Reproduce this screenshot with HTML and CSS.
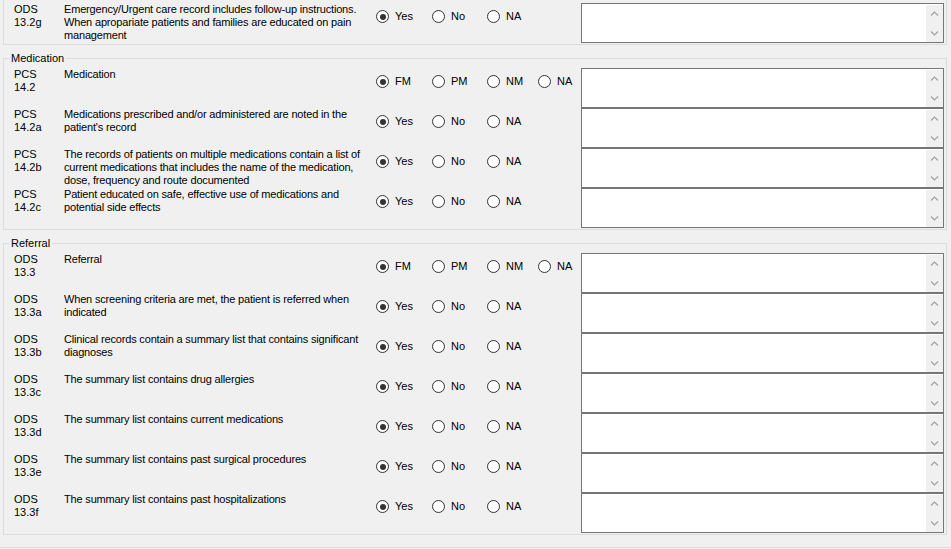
FILE: index.html
```html
<!DOCTYPE html>
<html lang="en">
<head>
<meta charset="utf-8">
<title>Checklist</title>
<link rel="stylesheet" href="styles.css">
</head>
<body>
<div class="group partial">
  <div class="row">
    <div class="code">ODS<br>13.2g</div>
    <div class="desc">Emergency/Urgent care record includes follow-up instructions.<br>When apropariate patients and families are educated on pain<br>management</div>
    <div class="opts"><span class="opt w1"><span class="radio on"></span>Yes</span><span class="opt w2"><span class="radio"></span>No</span><span class="opt w3"><span class="radio"></span>NA</span></div>
    <div class="memo"><div class="vscroll"><span class="btn"><svg width="9" height="5" viewBox="0 0 9 5"><path d="M1 4.5L4.5 1L8 4.5"/></svg></span><span class="btn"><svg width="9" height="5" viewBox="0 0 9 5"><path d="M1 0.5L4.5 4L8 0.5"/></svg></span></div></div>
  </div>
</div>

<fieldset class="group">
  <legend>Medication</legend>
  <div class="row">
    <div class="code">PCS<br>14.2</div>
    <div class="desc">Medication</div>
    <div class="opts"><span class="opt w1"><span class="radio on"></span>FM</span><span class="opt w2"><span class="radio"></span>PM</span><span class="opt w3"><span class="radio"></span>NM</span><span class="opt"><span class="radio"></span>NA</span></div>
    <div class="memo"><div class="vscroll"><span class="btn"><svg width="9" height="5" viewBox="0 0 9 5"><path d="M1 4.5L4.5 1L8 4.5"/></svg></span><span class="btn"><svg width="9" height="5" viewBox="0 0 9 5"><path d="M1 0.5L4.5 4L8 0.5"/></svg></span></div></div>
  </div>
  <div class="row">
    <div class="code">PCS<br>14.2a</div>
    <div class="desc">Medications prescribed and/or administered are noted in the<br>patient's record</div>
    <div class="opts"><span class="opt w1"><span class="radio on"></span>Yes</span><span class="opt w2"><span class="radio"></span>No</span><span class="opt w3"><span class="radio"></span>NA</span></div>
    <div class="memo"><div class="vscroll"><span class="btn"><svg width="9" height="5" viewBox="0 0 9 5"><path d="M1 4.5L4.5 1L8 4.5"/></svg></span><span class="btn"><svg width="9" height="5" viewBox="0 0 9 5"><path d="M1 0.5L4.5 4L8 0.5"/></svg></span></div></div>
  </div>
  <div class="row">
    <div class="code">PCS<br>14.2b</div>
    <div class="desc">The records of patients on multiple medications contain a list of<br>current medications that includes the name of the medication,<br>dose, frequency and route documented</div>
    <div class="opts"><span class="opt w1"><span class="radio on"></span>Yes</span><span class="opt w2"><span class="radio"></span>No</span><span class="opt w3"><span class="radio"></span>NA</span></div>
    <div class="memo"><div class="vscroll"><span class="btn"><svg width="9" height="5" viewBox="0 0 9 5"><path d="M1 4.5L4.5 1L8 4.5"/></svg></span><span class="btn"><svg width="9" height="5" viewBox="0 0 9 5"><path d="M1 0.5L4.5 4L8 0.5"/></svg></span></div></div>
  </div>
  <div class="row">
    <div class="code">PCS<br>14.2c</div>
    <div class="desc">Patient educated on safe, effective use of medications and<br>potential side effects</div>
    <div class="opts"><span class="opt w1"><span class="radio on"></span>Yes</span><span class="opt w2"><span class="radio"></span>No</span><span class="opt w3"><span class="radio"></span>NA</span></div>
    <div class="memo"><div class="vscroll"><span class="btn"><svg width="9" height="5" viewBox="0 0 9 5"><path d="M1 4.5L4.5 1L8 4.5"/></svg></span><span class="btn"><svg width="9" height="5" viewBox="0 0 9 5"><path d="M1 0.5L4.5 4L8 0.5"/></svg></span></div></div>
  </div>
</fieldset>

<fieldset class="group">
  <legend>Referral</legend>
  <div class="row">
    <div class="code">ODS<br>13.3</div>
    <div class="desc">Referral</div>
    <div class="opts"><span class="opt w1"><span class="radio on"></span>FM</span><span class="opt w2"><span class="radio"></span>PM</span><span class="opt w3"><span class="radio"></span>NM</span><span class="opt"><span class="radio"></span>NA</span></div>
    <div class="memo"><div class="vscroll"><span class="btn"><svg width="9" height="5" viewBox="0 0 9 5"><path d="M1 4.5L4.5 1L8 4.5"/></svg></span><span class="btn"><svg width="9" height="5" viewBox="0 0 9 5"><path d="M1 0.5L4.5 4L8 0.5"/></svg></span></div></div>
  </div>
  <div class="row">
    <div class="code">ODS<br>13.3a</div>
    <div class="desc">When screening criteria are met, the patient is referred when<br>indicated</div>
    <div class="opts"><span class="opt w1"><span class="radio on"></span>Yes</span><span class="opt w2"><span class="radio"></span>No</span><span class="opt w3"><span class="radio"></span>NA</span></div>
    <div class="memo"><div class="vscroll"><span class="btn"><svg width="9" height="5" viewBox="0 0 9 5"><path d="M1 4.5L4.5 1L8 4.5"/></svg></span><span class="btn"><svg width="9" height="5" viewBox="0 0 9 5"><path d="M1 0.5L4.5 4L8 0.5"/></svg></span></div></div>
  </div>
  <div class="row">
    <div class="code">ODS<br>13.3b</div>
    <div class="desc">Clinical records contain a summary list that contains significant<br>diagnoses</div>
    <div class="opts"><span class="opt w1"><span class="radio on"></span>Yes</span><span class="opt w2"><span class="radio"></span>No</span><span class="opt w3"><span class="radio"></span>NA</span></div>
    <div class="memo"><div class="vscroll"><span class="btn"><svg width="9" height="5" viewBox="0 0 9 5"><path d="M1 4.5L4.5 1L8 4.5"/></svg></span><span class="btn"><svg width="9" height="5" viewBox="0 0 9 5"><path d="M1 0.5L4.5 4L8 0.5"/></svg></span></div></div>
  </div>
  <div class="row">
    <div class="code">ODS<br>13.3c</div>
    <div class="desc">The summary list contains drug allergies</div>
    <div class="opts"><span class="opt w1"><span class="radio on"></span>Yes</span><span class="opt w2"><span class="radio"></span>No</span><span class="opt w3"><span class="radio"></span>NA</span></div>
    <div class="memo"><div class="vscroll"><span class="btn"><svg width="9" height="5" viewBox="0 0 9 5"><path d="M1 4.5L4.5 1L8 4.5"/></svg></span><span class="btn"><svg width="9" height="5" viewBox="0 0 9 5"><path d="M1 0.5L4.5 4L8 0.5"/></svg></span></div></div>
  </div>
  <div class="row">
    <div class="code">ODS<br>13.3d</div>
    <div class="desc">The summary list contains current medications</div>
    <div class="opts"><span class="opt w1"><span class="radio on"></span>Yes</span><span class="opt w2"><span class="radio"></span>No</span><span class="opt w3"><span class="radio"></span>NA</span></div>
    <div class="memo"><div class="vscroll"><span class="btn"><svg width="9" height="5" viewBox="0 0 9 5"><path d="M1 4.5L4.5 1L8 4.5"/></svg></span><span class="btn"><svg width="9" height="5" viewBox="0 0 9 5"><path d="M1 0.5L4.5 4L8 0.5"/></svg></span></div></div>
  </div>
  <div class="row">
    <div class="code">ODS<br>13.3e</div>
    <div class="desc">The summary list contains past surgical procedures</div>
    <div class="opts"><span class="opt w1"><span class="radio on"></span>Yes</span><span class="opt w2"><span class="radio"></span>No</span><span class="opt w3"><span class="radio"></span>NA</span></div>
    <div class="memo"><div class="vscroll"><span class="btn"><svg width="9" height="5" viewBox="0 0 9 5"><path d="M1 4.5L4.5 1L8 4.5"/></svg></span><span class="btn"><svg width="9" height="5" viewBox="0 0 9 5"><path d="M1 0.5L4.5 4L8 0.5"/></svg></span></div></div>
  </div>
  <div class="row">
    <div class="code">ODS<br>13.3f</div>
    <div class="desc">The summary list contains past hospitalizations</div>
    <div class="opts"><span class="opt w1"><span class="radio on"></span>Yes</span><span class="opt w2"><span class="radio"></span>No</span><span class="opt w3"><span class="radio"></span>NA</span></div>
    <div class="memo"><div class="vscroll"><span class="btn"><svg width="9" height="5" viewBox="0 0 9 5"><path d="M1 4.5L4.5 1L8 4.5"/></svg></span><span class="btn"><svg width="9" height="5" viewBox="0 0 9 5"><path d="M1 0.5L4.5 4L8 0.5"/></svg></span></div></div>
  </div>
</fieldset>

<div class="next"></div>
</body>
</html>
```

FILE: styles.css
```css
html, body {
  margin: 0;
  padding: 0;
  height: 549px;
  overflow: hidden;
  background: #f0f0f0;
}
body {
  font-family: "Liberation Sans", Arial, sans-serif;
  font-size: 11px;
  line-height: 13px;
  color: #000;
}
.group {
  box-sizing: border-box;
  width: 944px;
  margin: 7px 0 0 3px;
  padding: 3px 0 1px 0;
  border: 1px solid #dcdcdc;
  min-width: 0;
}
.group.partial {
  margin-top: 0;
  border-top: none;
}
fieldset.group {
  padding-top: 3px;
}
legend {
  margin-left: 5px;
  padding: 0 2px;
  font-size: 11px;
  line-height: 13px;
}
.row {
  display: grid;
  grid-template-columns: 50px 312px 205px 363px;
  height: 40px;
  padding: 0 2px 0 10px;
}
.code, .desc {
  white-space: nowrap;
}
.desc {
  letter-spacing: -0.17px;
}
.opts {
  display: flex;
  align-items: flex-start;
  padding-top: 7px;
}
.opt {
  display: flex;
  align-items: center;
  height: 13px;
}
.w1 { width: 56px; }
.w2 { width: 55px; }
.w3 { width: 51px; }
.radio {
  box-sizing: border-box;
  width: 13px;
  height: 13px;
  border: 1px solid #333;
  border-radius: 50%;
  background: #fff;
  margin-right: 6px;
  display: grid;
  place-items: center;
}
.radio.on::after {
  content: "";
  width: 6px;
  height: 6px;
  border-radius: 50%;
  background: #333;
}
.memo {
  box-sizing: border-box;
  height: 40px;
  border: 1px solid #767676;
  background: #fff;
  display: flex;
  justify-content: flex-end;
}
.vscroll {
  width: 17px;
  margin: 1px 0 0 0;
  background: #f0f0f0;
  display: flex;
  flex-direction: column;
  justify-content: space-between;
}
.btn {
  height: 17px;
  display: flex;
  align-items: center;
  justify-content: center;
}
.btn svg path {
  fill: none;
  stroke: #a0a0a0;
  stroke-width: 1.1;
}
.next {
  margin-top: 12px;
  border-top: 1px solid #dcdcdc;
  height: 10px;
}
```
